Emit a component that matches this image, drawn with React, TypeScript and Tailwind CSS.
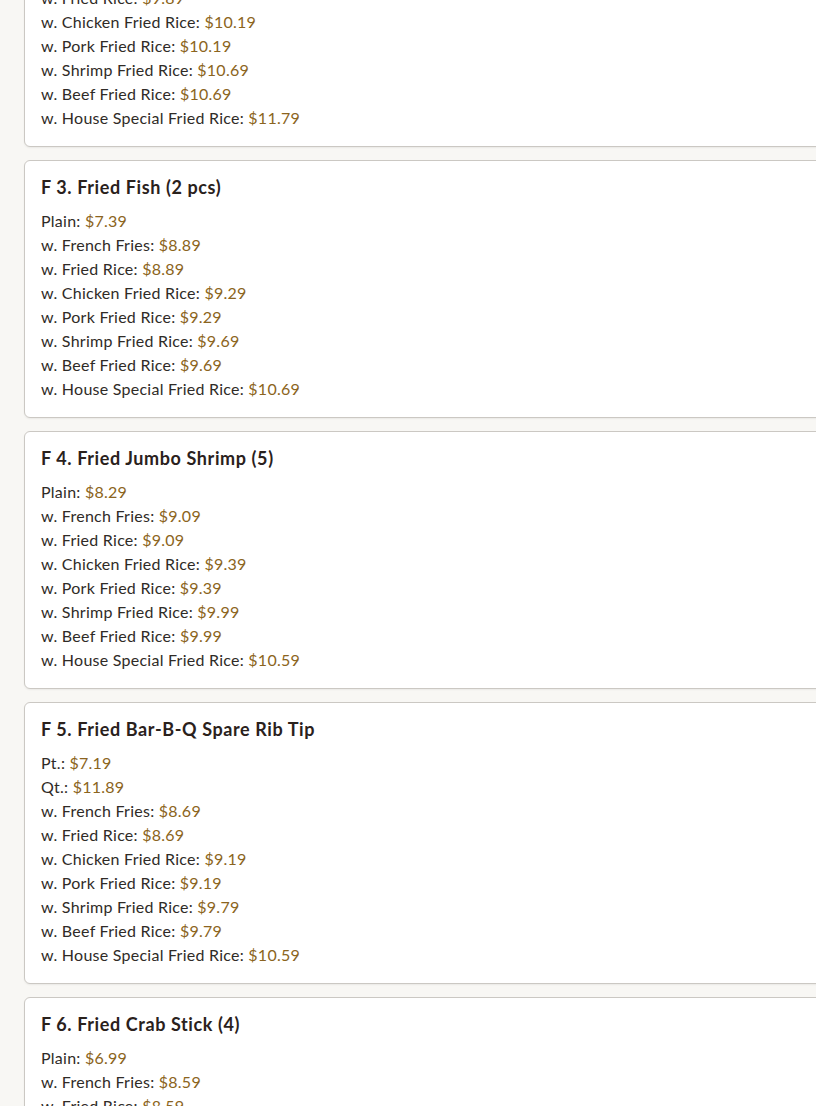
import React from 'react';

type Item = { label: string; price: string };
type Dish = { title: string; items: Item[] };

const withRice = (ff: string, fr: string, ch: string, pk: string, sh: string, bf: string, hs: string): Item[] => [
  { label: 'w. French Fries', price: ff },
  { label: 'w. Fried Rice', price: fr },
  { label: 'w. Chicken Fried Rice', price: ch },
  { label: 'w. Pork Fried Rice', price: pk },
  { label: 'w. Shrimp Fried Rice', price: sh },
  { label: 'w. Beef Fried Rice', price: bf },
  { label: 'w. House Special Fried Rice', price: hs },
];

const dishes: Dish[] = [
  {
    title: 'F 2. Fried Chicken Wings (4)',
    items: [{ label: 'Plain', price: '$8.39' }, ...withRice('$9.89', '$9.89', '$10.19', '$10.19', '$10.69', '$10.69', '$11.79')],
  },
  {
    title: 'F 3. Fried Fish (2 pcs)',
    items: [{ label: 'Plain', price: '$7.39' }, ...withRice('$8.89', '$8.89', '$9.29', '$9.29', '$9.69', '$9.69', '$10.69')],
  },
  {
    title: 'F 4. Fried Jumbo Shrimp (5)',
    items: [{ label: 'Plain', price: '$8.29' }, ...withRice('$9.09', '$9.09', '$9.39', '$9.39', '$9.99', '$9.99', '$10.59')],
  },
  {
    title: 'F 5. Fried Bar-B-Q Spare Rib Tip',
    items: [
      { label: 'Pt.', price: '$7.19' },
      { label: 'Qt.', price: '$11.89' },
      ...withRice('$8.69', '$8.69', '$9.19', '$9.19', '$9.79', '$9.79', '$10.59'),
    ],
  },
  {
    title: 'F 6. Fried Crab Stick (4)',
    items: [{ label: 'Plain', price: '$6.99' }, ...withRice('$8.59', '$8.59', '$8.89', '$8.89', '$9.39', '$9.39', '$10.29')],
  },
];

const DishCard = ({ dish }: { dish: Dish }) => (
  <div className="w-[900px] bg-white border border-[#cbc8c3] rounded-md px-4 py-4 shadow-[0_1px_2px_rgba(0,0,0,0.06)]">
    <h3 className="text-[18px] leading-[20px] font-bold tracking-[0.6px] text-[#2a211c] mb-3">{dish.title}</h3>
    <ul>
      {dish.items.map((it) => (
        <li key={it.label} className="text-[16px] leading-[24px] tracking-[0.25px] text-[#2f2b27]">
          {it.label}: <span className="text-[#8b6420]">{it.price}</span>
        </li>
      ))}
    </ul>
  </div>
);

export default function App() {
  return (
    <div className="w-screen h-[1106px] overflow-hidden bg-[#f8f7f4]" style={{ fontFamily: '"Lato", "Noto Sans", sans-serif' }}>
      <div className="-mt-[111px] pl-6 flex flex-col gap-[13px]">
        {dishes.map((d) => (
          <DishCard key={d.title} dish={d} />
        ))}
      </div>
    </div>
  );
}
